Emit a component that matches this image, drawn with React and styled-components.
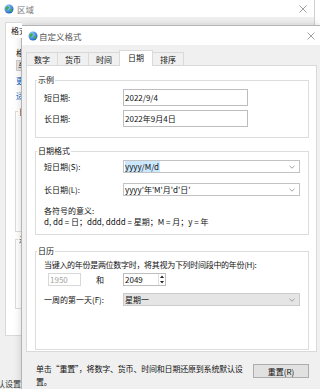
import React from 'react';
import styled, { createGlobalStyle } from 'styled-components';

const GlobalStyle = createGlobalStyle`
  html, body { margin: 0; padding: 0; background: #fff; }
  body {
    font-family: "Noto Sans CJK SC", "Noto Sans", sans-serif;
    font-size: 8px;
    color: #111;
  }
  * { box-sizing: border-box; }
`;

const Desktop = styled.div`
  position: relative;
  width: 320px;
  height: 389px;
  overflow: hidden;
  background: #fff;
`;

/* ---------- background window (区域) ---------- */

const BgWindow = styled.div`
  width: 315px;
  height: 389px;
  background: #f0f0f0;
  border-right: 1px solid #d2d2d2;
  display: flex;
  flex-direction: column;
`;

const BgTitleBar = styled.div`
  height: 17px;
  flex: none;
  background: #fff;
  display: flex;
  align-items: center;
  padding-left: 4px;
  gap: 3px;
  color: #7a7a7a;
  font-size: 8.5px;
`;

const CloseBtn = styled.div`
  margin-left: auto;
  width: ${p => p.$w}px;
  height: 100%;
  display: flex;
  align-items: center;
  justify-content: center;
`;

/* only the strip left of the dialog is ever seen, so it is clipped there */
const BgBody = styled.div`
  padding: 5px 0 0 5px;
  width: 22px;
  overflow: hidden;
  display: flex;
  flex-direction: column;
`;

const BgTab = styled.div`
  width: 17px;
  height: 16px;
  background: #fff;
  border: 1px solid #d9d9d9;
  border-bottom: none;
  border-right: none;
  padding-left: 5px;
  line-height: 15px;
  margin-bottom: -1px;
  overflow: hidden;
  white-space: nowrap;
  position: relative;
  z-index: 1;
`;

const BgPanel = styled.div`
  width: 17px;
  height: 300px;
  background: #fff;
  border: 1px solid #d9d9d9;
  border-right: none;
  padding: 10px 0 0 10px;
  overflow: hidden;
  display: flex;
  flex-direction: column;
`;

const BgLabel = styled.div`
  line-height: 10px;
  white-space: nowrap;
`;

const BgCombo = styled.div`
  margin-top: 2px;
  width: 200px;
  height: 11px;
  background: #e6e6e6;
  border: 1px solid #cccccc;
  padding-left: 1px;
  line-height: 9px;
  white-space: nowrap;
`;

const BgLink = styled.div`
  margin-top: 5px;
  line-height: 10px;
  color: #0066cc;
  white-space: nowrap;
`;

const BgGroup = styled.fieldset`
  margin: ${p => p.$mt}px 0 0 -1px;
  padding: 0 0 0 4px;
  width: 290px;
  height: ${p => p.$h}px;
  border: 1px solid #dcdcdc;
`;

const BgLegend = styled.legend`
  padding: 0 1px;
  margin-left: -2px;
  line-height: 10px;
  white-space: nowrap;
`;

const BgFooter = styled.div`
  margin: 43px 0 0 -5px;
  width: 21px;
  display: flex;
  justify-content: flex-end;
  overflow: hidden;
  white-space: nowrap;
  line-height: 10px;
  color: #333;
`;

/* ---------- dialog (自定义格式) ---------- */

const Dialog = styled.div`
  position: absolute;
  left: 21px;
  top: 25px;
  width: 300px;
  height: 370px;
  background: #f0f0f0;
  border: 1px solid #b4b4b4;
  box-shadow: 0 0 8px rgba(0, 0, 0, 0.16);
  display: flex;
  flex-direction: column;
`;

const TitleBar = styled.div`
  height: 19px;
  flex: none;
  background: #fff;
  display: flex;
  align-items: center;
  padding-left: 6px;
  gap: 1px;
  color: #555;
  font-size: 8.5px;
`;

const DialogBody = styled.div`
  padding: 5px 0 0 4px;
  display: flex;
  flex-direction: column;
`;

const TabStrip = styled.div`
  display: flex;
  align-items: flex-end;
  height: 15px;
  position: relative;
  z-index: 1;
`;

const Tab = styled.div`
  height: ${p => (p.$active ? 16 : 13)}px;
  padding: 0 ${p => (p.$active ? 8 : 7)}px ${p => (p.$active ? 2 : 0)}px;
  margin-left: ${p => (p.$first ? 0 : -1)}px;
  margin-bottom: ${p => (p.$active ? -1 : 0)}px;
  background: ${p => (p.$active ? '#fff' : '#f0f0f0')};
  border: 1px solid #d9d9d9;
  border-bottom: none;
  display: flex;
  align-items: center;
  white-space: nowrap;
  position: relative;
  z-index: ${p => (p.$active ? 2 : 1)};
`;

const Panel = styled.div`
  width: 291px;
  height: 287px;
  background: #fff;
  border: 1px solid #d9d9d9;
  padding: 9px 7px 0 8px;
  display: flex;
  flex-direction: column;
`;

const Group = styled.fieldset`
  margin: ${p => p.$mt || 0}px 0 0;
  padding: 4px 8px ${p => p.$pb}px 8px;
  border: 1px solid #dcdcdc;
  min-width: 0;
  display: flex;
  flex-direction: column;
`;

const GroupTitle = styled.legend`
  padding: 0 1px;
  margin-left: -7px;
  line-height: 10px;
`;

const Row = styled.div`
  display: flex;
  align-items: center;
  margin-top: ${p => p.$mt || 0}px;
`;

const FieldLabel = styled.div`
  width: 79px;
  flex: none;
  white-space: nowrap;
`;

const TextBox = styled.div`
  width: ${p => p.$w}px;
  height: ${p => p.$h}px;
  margin-left: ${p => p.$ml || 0}px;
  flex: none;
  background: #fff;
  border: 1px solid ${p => (p.$disabled ? '#d8d8d8' : '#bdbdbd')};
  color: ${p => (p.$disabled ? '#a3a3a3' : '#111')};
  padding-left: 1px;
  display: flex;
  align-items: center;
  white-space: nowrap;
`;

const Combo = styled.div`
  width: 177px;
  height: 13px;
  flex: none;
  background: ${p => (p.$gray ? '#e5e5e5' : '#fff')};
  border: 1px solid ${p => (p.$gray ? '#cccccc' : '#c3c3c3')};
  padding: 0 4px 0 1px;
  display: flex;
  align-items: center;
  justify-content: space-between;
  white-space: nowrap;
`;

const Selected = styled.span`
  background: #cce8ff;
  padding-right: 1px;
`;

const Text = styled.div`
  line-height: ${p => p.$lh || 10}px;
  margin-top: ${p => p.$mt || 0}px;
  letter-spacing: ${p => p.$ls || 0}px;
  white-space: nowrap;
`;

const AndWord = styled.span`
  margin: 0 19px 0 15px;
`;

const SpinBox = styled.div`
  width: 43px;
  height: 13px;
  display: flex;
  background: #fff;
  border: 1px solid #bdbdbd;
`;

const SpinText = styled.div`
  flex: 1;
  padding-left: 1px;
  display: flex;
  align-items: center;
`;

const SpinButtons = styled.div`
  width: 7px;
  display: flex;
  flex-direction: column;
  border-left: 1px solid #e0e0e0;
`;

const SpinHalf = styled.div`
  flex: 1;
  display: flex;
  align-items: center;
  justify-content: center;
`;

const Footer = styled.div`
  display: flex;
  align-items: flex-start;
  padding: 10px 0 0 10px;
`;

const FooterText = styled.div`
  display: flex;
  flex-direction: column;
  line-height: 13px;
  letter-spacing: -0.2px;
  white-space: nowrap;
`;

const Button = styled.div`
  margin: 2px 11px 0 auto;
  width: 56px;
  height: 14px;
  background: #e1e1e1;
  border: 1px solid #adadad;
  display: flex;
  align-items: center;
  justify-content: center;
`;

/* ---------- drawings ---------- */

const Globe = ({ id }) => (
  <svg width="10" height="10" viewBox="0 0 10 10">
    <defs>
      <radialGradient id={id} cx="35%" cy="30%" r="75%">
        <stop offset="0" stopColor="#9ad6ff" />
        <stop offset="1" stopColor="#1a5fc4" />
      </radialGradient>
    </defs>
    <circle cx="5" cy="5" r="4.5" fill={`url(#${id})`} />
    <path d="M1.8 3.4C2.8 2 4.4 1.9 5 3C5.4 4 4 4.4 3.6 5.4C3.2 6.4 2.1 6 1.5 5C1.2 4.3 1.3 3.8 1.8 3.4Z" fill="#3fae49" />
    <path d="M6.2 5.3C7 4.9 8.3 5.3 8.4 6.3C8.1 7.6 6.9 8.3 6.2 7.7C5.8 7.1 5.8 5.8 6.2 5.3Z" fill="#3fae49" />
  </svg>
);

const CloseX = () => (
  <svg width="8" height="8" viewBox="0 0 8 8">
    <path d="M0.5 0.5L7.5 7.5M7.5 0.5L0.5 7.5" stroke="#8a8a8a" strokeWidth="0.8" />
  </svg>
);

const Chevron = () => (
  <svg width="6" height="4" viewBox="0 0 6 4">
    <path d="M0.5 0.8L3 3.2L5.5 0.8" fill="none" stroke="#8a8a8a" strokeWidth="0.8" />
  </svg>
);

const Arrow = ({ up }) => (
  <svg width="4" height="3" viewBox="0 0 4 3">
    <path d={up ? 'M0 3L2 0.5L4 3Z' : 'M0 0L2 2.5L4 0Z'} fill="#222" />
  </svg>
);

const tabs = ['数字', '货币', '时间', '日期', '排序'];

export default function App() {
  return (
    <>
      <GlobalStyle />
      <Desktop>
        <BgWindow>
          <BgTitleBar>
            <Globe id="g1" />
            <span>区域</span>
            <CloseBtn $w={22}><CloseX /></CloseBtn>
          </BgTitleBar>
          <BgBody>
            <BgTab>格式</BgTab>
            <BgPanel>
              <BgLabel>格式(F):</BgLabel>
              <BgCombo>与 Windows 显示语言匹配(推荐)</BgCombo>
              <BgLink>更改排序方法</BgLink>
              <BgLink>适用语言首选项</BgLink>
              <BgGroup $mt={6} $h={125}>
                <BgLegend>日期和时间格式</BgLegend>
              </BgGroup>
              <BgGroup $mt={3} $h={74}>
                <BgLegend>示例</BgLegend>
              </BgGroup>
            </BgPanel>
            <BgFooter><span>更改默认设置</span></BgFooter>
          </BgBody>
        </BgWindow>

        <Dialog>
          <TitleBar>
            <Globe id="g2" />
            <span>自定义格式</span>
            <CloseBtn $w={18}><CloseX /></CloseBtn>
          </TitleBar>
          <DialogBody>
            <TabStrip>
              {tabs.map((t, i) => (
                <Tab key={t} $first={i === 0} $active={t === '日期'}>{t}</Tab>
              ))}
            </TabStrip>
            <Panel>
              <Group $pb={10}>
                <GroupTitle>示例</GroupTitle>
                <Row>
                  <FieldLabel>短日期:</FieldLabel>
                  <TextBox $w={125} $h={17}>2022/9/4</TextBox>
                </Row>
                <Row $mt={4}>
                  <FieldLabel>长日期:</FieldLabel>
                  <TextBox $w={125} $h={17}>2022年9月4日</TextBox>
                </Row>
              </Group>

              <Group $mt={8} $pb={7}>
                <GroupTitle>日期格式</GroupTitle>
                <Row>
                  <FieldLabel>短日期(S):</FieldLabel>
                  <Combo><Selected>yyyy/M/d</Selected><Chevron /></Combo>
                </Row>
                <Row $mt={10}>
                  <FieldLabel>长日期(L):</FieldLabel>
                  <Combo><span>yyyy'年'M'月'd'日'</span><Chevron /></Combo>
                </Row>
                <Text $mt={10}>各符号的意义:</Text>
                <Text $lh={11}>d, dd = 日；ddd, dddd = 星期；M = 月；y = 年</Text>
              </Group>

              <Group $mt={11} $pb={43}>
                <GroupTitle>日历</GroupTitle>
                <Text $ls={-0.3}>当键入的年份是两位数字时，将其视为下列时间段中的年份(H):</Text>
                <Row $mt={3}>
                  <TextBox $w={33} $h={13} $ml={4} $disabled>1950</TextBox>
                  <AndWord>和</AndWord>
                  <SpinBox>
                    <SpinText>2049</SpinText>
                    <SpinButtons>
                      <SpinHalf><Arrow up /></SpinHalf>
                      <SpinHalf><Arrow /></SpinHalf>
                    </SpinButtons>
                  </SpinBox>
                </Row>
                <Row $mt={7}>
                  <FieldLabel>一周的第一天(F):</FieldLabel>
                  <Combo $gray><span>星期一</span><Chevron /></Combo>
                </Row>
              </Group>
            </Panel>
            <Footer>
              <FooterText>
                <span>单击“重置”，将数字、货币、时间和日期还原到系统默认设</span>
                <span>置。</span>
              </FooterText>
              <Button>重置(R)</Button>
            </Footer>
          </DialogBody>
        </Dialog>
      </Desktop>
    </>
  );
}
